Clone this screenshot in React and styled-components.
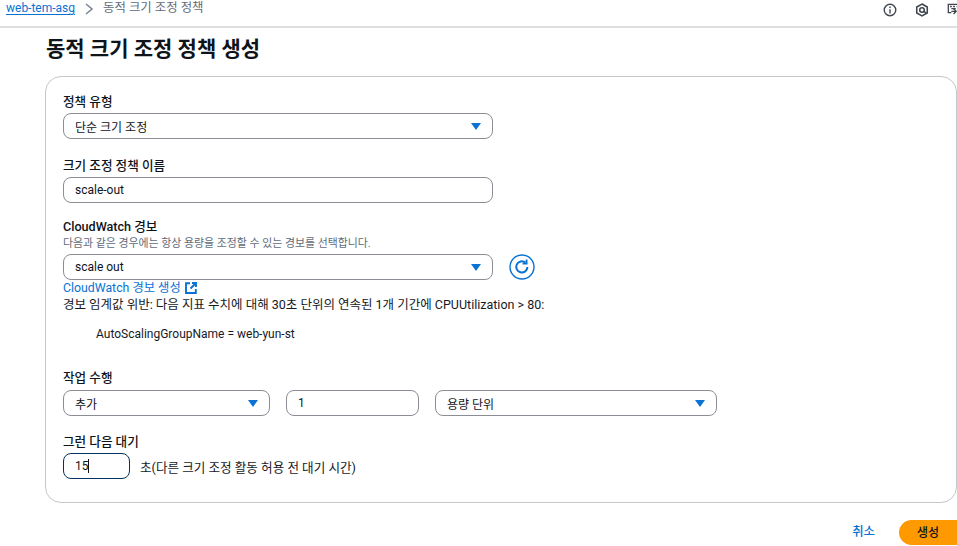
import React from "react";
import styled, { createGlobalStyle } from "styled-components";

const Stack = `Roboto, "Noto Sans CJK KR", sans-serif`;
const Global = createGlobalStyle`
  html, body { margin: 0; padding: 0; background: #fff; overflow: hidden; }
  body { font-family: ${Stack}; color: #16191f; font-size: 12px; }
`;
const Page = styled.div`width: 957px; height: 546px; display: flex; flex-direction: column; overflow: hidden;`;
const TopBar = styled.header`
  height: 26px; flex: none; border-bottom: 2px solid #dedee0; display: flex; align-items: flex-start;
  padding: 0 0 0 6px; box-sizing: content-box;
`;
const Crumb = styled.a`color: #0972d3; font-size: 12px; text-decoration: underline; text-underline-offset: 2px; line-height: 16px;`;
const Current = styled.span`color: #5f6b7a; font-size: 12.4px; margin: 1px 0 0 9px; line-height: 14px;`;
const Chevron = styled.svg`width: 10px; height: 12px; margin: 3px 0 0 9px; color: #7d8998;`;
const TopIcons = styled.div`margin: 3px -4px 0 auto; display: flex; align-items: center; gap: 18px;`;
const TopIcon = styled.svg`width: 14px; height: 14px; color: #414750; display: block;`;
const Title = styled.h1`
  margin: 7px 0 0 46px; font-size: 21px; line-height: 28px; font-weight: 700; color: #0f141a; height: 28px;
`;
const Card = styled.section`
  margin: 13px 0 0 45px; height: 427px; box-sizing: border-box; border: 1px solid #c6c6cd;
  border-radius: 16px; padding: 17px 0 0 17px; flex: none;
`;
const Field = styled.div`margin-bottom: ${p => p.$mb ?? 12}px;`;
const Label = styled.div`font-size: 12.6px; font-weight: 500; line-height: 16px; color: #0f141a; margin-bottom: ${p => p.$mb ?? 3}px;`;
const SectionGap = styled.div`height: ${p => p.$h}px;`;
const Hint = styled.div`font-size: 10.9px; line-height: 12px; color: #5f6b7a; margin: 0 0 4px;`;
const Control = styled.div`
  width: ${p => p.$w}px; height: 26px; box-sizing: border-box; flex: none;
  border: 1px solid ${p => (p.$focus ? "#033160" : "#8c8c94")}; border-radius: 8px;
  display: flex; align-items: center; justify-content: space-between; padding: 0 11px 0 11px;
  font-size: 12px; color: #0f141a; background: #fff;
`;
const Caret = styled.span`
  width: 0; height: 0; border-left: 5px solid transparent; border-right: 5px solid transparent;
  border-top: 7px solid #0972d3;
`;
const Row = styled.div`display: flex; align-items: center; gap: ${p => p.$gap ?? 16}px;`;
const RefreshBtn = styled.svg`width: 26px; height: 26px; color: #0972d3; display: block; margin-top: -1px;`;
const LinkLine = styled.a`display: flex; align-items: center; gap: 3px; color: #0972d3; font-size: 12.3px; line-height: 14px; height: 14px; margin-top: 1px;`;
const ExtIcon = styled.svg`width: 12px; height: 12px; margin-left: 1px;`;
const Body = styled.div`font-size: 12.5px; line-height: 16px; color: #16191f; margin-top: 2px;`;
const Dim = styled.div`font-size: 12px; line-height: 16px; color: #16191f; margin: 13px 0 0 33px;`;
const Cursor = styled.span`display: inline-block; width: 1px; height: 14px; background: #0f141a; vertical-align: -3px; margin-left: -1px;`;
const WaitText = styled.span`font-size: 12.6px; color: #16191f; margin-left: -6px;`;
const Footer = styled.footer`display: flex; justify-content: flex-end; align-items: center; gap: 24px; margin-top: 16px; height: 26px;`;
const Cancel = styled.a`color: #0972d3; font-size: 12.4px; font-weight: 500; margin-bottom: 2px;`;
const Primary = styled.button`
  width: 58px; height: 25px; border: 0; padding: 0 0 2px; border-radius: 13px 0 0 13px; background: #ff9900; color: #0f141a;
  font: 500 12px ${Stack};
`;

const Select = ({ w, children }) => <Control $w={w}><span>{children}</span><Caret /></Control>;

export default function App() {
  return (
    <Page>
      <Global />
      <TopBar>
        <Crumb>web-tem-asg</Crumb>
        <Chevron viewBox="0 0 10 12" fill="none" stroke="currentColor" strokeWidth="1.6"><path d="M2 1l6 5-6 5" /></Chevron>
        <Current>동적 크기 조정 정책</Current>
        <TopIcons>
          <TopIcon viewBox="0 0 16 16" fill="none" stroke="currentColor" strokeWidth="1.6">
            <circle cx="8" cy="8" r="6.6" /><path d="M8 7v5M8 4v1.8" />
          </TopIcon>
          <TopIcon viewBox="0 0 16 16" fill="none" stroke="currentColor" strokeWidth="1.8">
            <path d="M8 1.2l6 3.4v6.8l-6 3.4-6-3.4V4.6z" /><circle cx="8" cy="8" r="2.6" /><path d="M10 9.5l3 2" />
          </TopIcon>
          <TopIcon viewBox="0 0 16 16" fill="none" stroke="currentColor" strokeWidth="1.5">
            <path d="M5 11H1.5V1.5h13V8" /><path d="M3.5 4h2M7 4h2M11 4h1.5" /><path d="M5 6.5h5M7.5 6.5l3 3-3 3M5 9.5h5" /><path d="M12 14.5h3" />
          </TopIcon>
        </TopIcons>
      </TopBar>
      <Title>동적 크기 조정 정책 생성</Title>
      <Card>
        <Field $mb={19}>
          <Label>정책 유형</Label>
          <Select w={430}>단순 크기 조정</Select>
        </Field>
        <Field $mb={16}>
          <Label $mb={3}>크기 조정 정책 이름</Label>
          <Control $w={430}>scale-out</Control>
        </Field>
        <Field $mb={0}>
          <Label>CloudWatch 경보</Label>
          <Hint>다음과 같은 경우에는 항상 용량을 조정할 수 있는 경보를 선택합니다.</Hint>
          <Row>
            <Select w={430}>scale out</Select>
            <RefreshBtn viewBox="0 0 26 26" fill="none" stroke="currentColor">
              <circle cx="13" cy="13" r="12" strokeWidth="1.4" />
              <path d="M18.4 13a5.6 5.6 0 1 1-2-4.4" strokeWidth="2" />
              <path d="M17.6 5.5v4h-4" strokeWidth="1.8" />
            </RefreshBtn>
          </Row>
          <LinkLine>
            CloudWatch 경보 생성
            <ExtIcon viewBox="0 0 12 12" fill="none" stroke="currentColor" strokeWidth="1.9">
              <path d="M5 1.2H1v9.8h9.8V7" /><path d="M7 1h4v4M11 1L5.5 6.5" />
            </ExtIcon>
          </LinkLine>
          <Body>경보 임계값 위반: 다음 지표 수치에 대해 30초 단위의 연속된 1개 기간에 CPUUtilization &gt; 80:</Body>
          <Dim>AutoScalingGroupName = web-yun-st</Dim>
        </Field>
        <SectionGap $h={28} />
        <Field $mb={18}>
          <Label $mb={4}>작업 수행</Label>
          <Row>
            <Select w={207}>추가</Select>
            <Control $w={133}>1</Control>
            <Select w={282}>용량 단위</Select>
          </Row>
        </Field>
        <Field $mb={0}>
          <Label $mb={3}>그런 다음 대기</Label>
          <Row>
            <Control $w={67} $focus><span>15<Cursor /></span></Control>
            <WaitText>초(다른 크기 조정 활동 허용 전 대기 시간)</WaitText>
          </Row>
        </Field>
      </Card>
      <Footer>
        <Cancel>취소</Cancel>
        <Primary>생성</Primary>
      </Footer>
    </Page>
  );
}
